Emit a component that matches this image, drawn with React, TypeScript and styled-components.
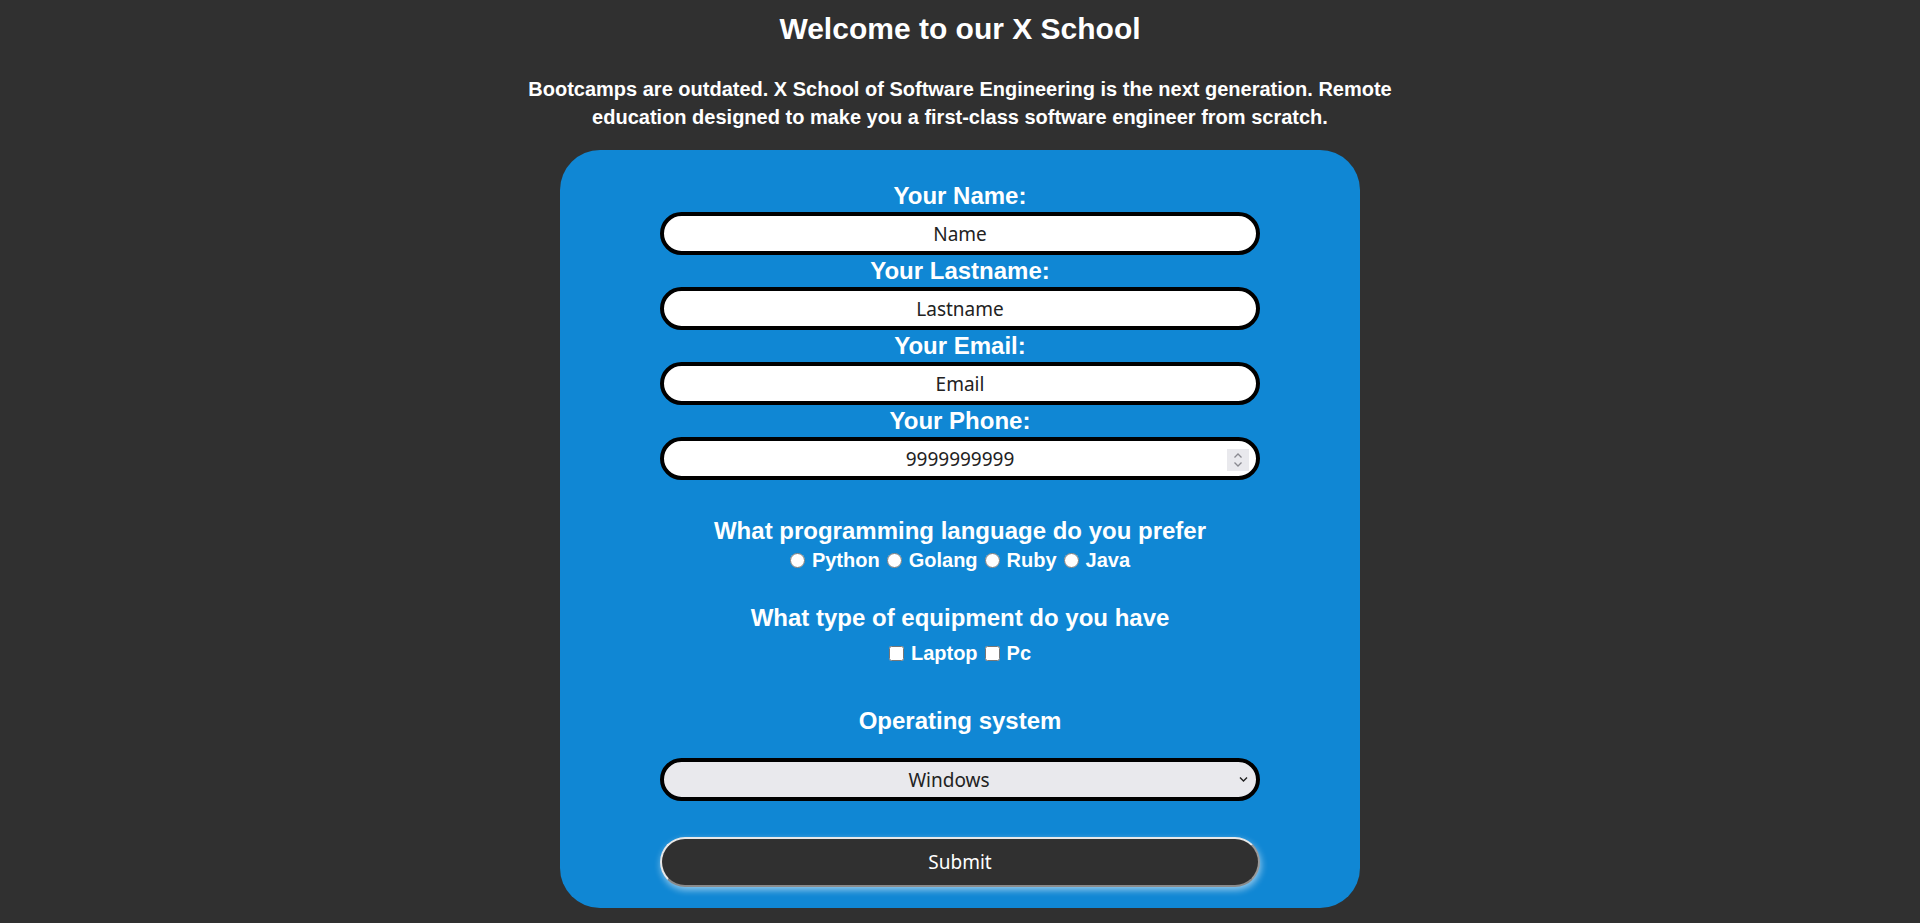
import React from "react";
import styled, { createGlobalStyle } from "styled-components";

const GlobalStyle = createGlobalStyle`
  html, body {
    margin: 0;
    padding: 0;
    background: #303030;
  }
  body {
    font-family: "Liberation Sans", Arial, sans-serif;
    color: #ffffff;
  }
`;

const Page = styled.main`
  display: flex;
  flex-direction: column;
  align-items: center;
  padding-bottom: 15px;
`;

const Title = styled.h1`
  margin: 11px 0 0;
  font-size: 30px;
  line-height: 36px;
  font-weight: 700;
  text-align: center;
`;

const Intro = styled.p`
  margin: 28px 0 0;
  max-width: 900px;
  font-size: 20px;
  line-height: 28px;
  font-weight: 700;
  text-align: center;
`;

const Card = styled.form`
  box-sizing: border-box;
  width: 800px;
  margin-top: 19px;
  padding: 30px 0 21px;
  background: #1087d4;
  border-radius: 40px;
  display: flex;
  flex-direction: column;
  align-items: center;
`;

const Label = styled.label`
  display: block;
  font-size: 24px;
  line-height: 32px;
  font-weight: 700;
  text-align: center;
`;

const fieldBase = `
  box-sizing: border-box;
  width: 600px;
  height: 43px;
  border: 4px solid #000;
  border-radius: 22px;
  font-family: "Noto Sans", "Open Sans", sans-serif;
  font-size: 19px;
  color: #222;
  text-align: center;
  outline: none;
`;

const FieldWrap = styled.div`
  position: relative;
`;

const TextInput = styled.input`
  ${fieldBase}
  background: #ffffff;
  padding: 0 14px;
  -moz-appearance: textfield;
  &::placeholder {
    color: #222;
    opacity: 1;
  }
  &::-webkit-inner-spin-button,
  &::-webkit-outer-spin-button {
    -webkit-appearance: none;
    margin: 0;
  }
`;

const Spinner = styled.svg`
  position: absolute;
  right: 11px;
  top: 12px;
  width: 22px;
  height: 22px;
  pointer-events: none;
`;

const Heading = styled.h2<{ $top: number }>`
  margin: ${(p) => p.$top}px 0 0;
  font-size: 24px;
  line-height: 28px;
  font-weight: 700;
  text-align: center;
`;

const OptionRow = styled.div<{ $top: number }>`
  display: flex;
  justify-content: center;
  align-items: center;
  gap: 7px;
  margin-top: ${(p) => p.$top}px;
  height: 28px;
`;

const Option = styled.label`
  display: inline-flex;
  align-items: center;
  gap: 7px;
  font-size: 20px;
  line-height: 28px;
  font-weight: 700;
`;

const Choice = styled.input`
  width: 15px;
  height: 15px;
  margin: 0;
`;

const SelectWrap = styled.div`
  position: relative;
  margin-top: 23px;
`;

const Select = styled.select`
  ${fieldBase}
  appearance: none;
  background: #e9e9ed;
  text-align-last: center;
  padding: 0 36px 0 14px;
`;

const Chevron = styled.svg`
  position: absolute;
  right: 12px;
  top: 18px;
  width: 9px;
  height: 7px;
  pointer-events: none;
`;

const SubmitButton = styled.button`
  box-sizing: border-box;
  width: 600px;
  height: 50px;
  margin-top: 36px;
  border-radius: 25px;
  border: 2px solid;
  border-color: #e8e8e8 #9a9a9a #8a8a8a #e8e8e8;
  background: #303030;
  color: #ffffff;
  font-family: "Noto Sans", "Open Sans", sans-serif;
  font-size: 19px;
  box-shadow: 1px 3px 7px rgba(255, 255, 255, 0.55);
  cursor: pointer;
`;

const fields = [
  { id: "name", label: "Your Name:", placeholder: "Name", type: "text" },
  { id: "lastname", label: "Your Lastname:", placeholder: "Lastname", type: "text" },
  { id: "email", label: "Your Email:", placeholder: "Email", type: "email" },
  { id: "phone", label: "Your Phone:", placeholder: "9999999999", type: "number" },
];

export default function App() {
  return (
    <>
      <GlobalStyle />
      <Page>
        <Title>Welcome to our X School</Title>
        <Intro>
          Bootcamps are outdated. X School of Software Engineering is the next generation. Remote
          education designed to make you a first-class software engineer from scratch.
        </Intro>
        <Card onSubmit={(e) => e.preventDefault()}>
          {fields.map((f) => (
            <React.Fragment key={f.id}>
              <Label htmlFor={f.id}>{f.label}</Label>
              <FieldWrap>
                <TextInput id={f.id} type={f.type} placeholder={f.placeholder} />
                {f.type === "number" && (
                  <Spinner viewBox="0 0 22 22">
                    <rect x="0" y="0" width="22" height="22" fill="#e9e9ed" />
                    <path d="M7.5 8.5 L11 5 L14.5 8.5" fill="none" stroke="#8a8a90" strokeWidth="1.3" />
                    <path d="M7.5 13.5 L11 17 L14.5 13.5" fill="none" stroke="#8a8a90" strokeWidth="1.3" />
                  </Spinner>
                )}
              </FieldWrap>
            </React.Fragment>
          ))}

          <Heading $top={37}>What programming language do you prefer</Heading>
          <OptionRow $top={1}>
            {["Python", "Golang", "Ruby", "Java"].map((l) => (
              <Option key={l}>
                <Choice type="radio" name="language" value={l} />
                {l}
              </Option>
            ))}
          </OptionRow>

          <Heading $top={30}>What type of equipment do you have</Heading>
          <OptionRow $top={7}>
            {["Laptop", "Pc"].map((l) => (
              <Option key={l}>
                <Choice type="checkbox" name="equipment" value={l} />
                {l}
              </Option>
            ))}
          </OptionRow>

          <Heading $top={40}>Operating system</Heading>
          <SelectWrap>
            <Select defaultValue="windows">
              <option value="windows">Windows</option>
              <option value="mac">Mac</option>
              <option value="linux">Linux</option>
            </Select>
            <Chevron viewBox="0 0 9 7">
              <path d="M1 1.5 L4.5 5 L8 1.5" fill="none" stroke="#222" strokeWidth="1.4" />
            </Chevron>
          </SelectWrap>

          <SubmitButton type="submit">Submit</SubmitButton>
        </Card>
      </Page>
    </>
  );
}
